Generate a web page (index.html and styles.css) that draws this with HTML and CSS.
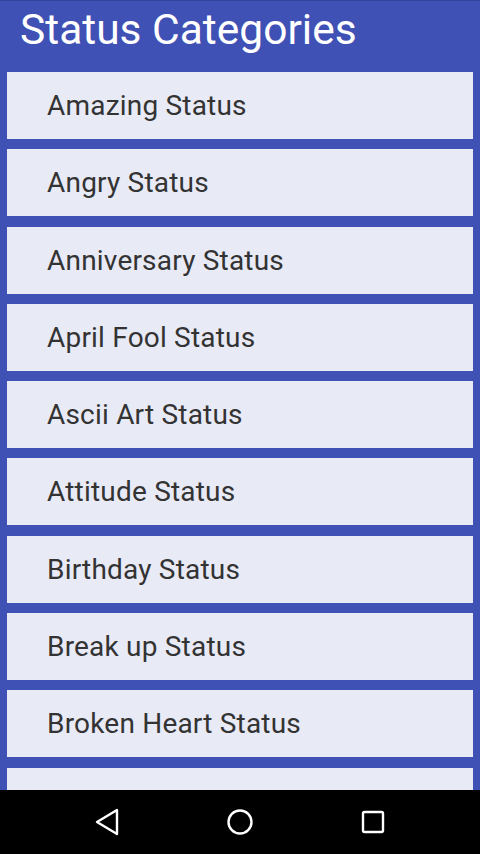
FILE: index.html
```html
<!DOCTYPE html>
<html lang="en">
<head>
  <meta charset="UTF-8">
  <meta name="viewport" content="width=device-width, initial-scale=1.0">
  <title>Status Categories</title>
  <link rel="stylesheet" href="styles.css">
</head>
<body>
  <div class="tela">
    <header class="topo">
      <h1>Status Categories</h1>
    </header>
    <div class="lista">
      <div class="item">Amazing Status</div>
      <div class="item">Angry Status</div>
      <div class="item">Anniversary Status</div>
      <div class="item">April Fool Status</div>
      <div class="item">Ascii Art Status</div>
      <div class="item">Attitude Status</div>
      <div class="item">Birthday Status</div>
      <div class="item">Break up Status</div>
      <div class="item">Broken Heart Status</div>
      <!-- proximo item fica escondido atras da barra -->
      <div class="item"></div>
    </div>
    <nav class="navegacao">
      <!-- voltar -->
      <svg width="26" height="30" viewBox="0 0 26 30">
        <polygon points="3,15 23,3 23,27" fill="none" stroke="#fff" stroke-width="2.4" stroke-linejoin="round"/>
      </svg>
      <!-- inicio -->
      <svg width="30" height="30" viewBox="0 0 30 30">
        <circle cx="15" cy="15" r="11.5" fill="none" stroke="#fff" stroke-width="2.4"/>
      </svg>
      <!-- recentes -->
      <svg width="26" height="26" viewBox="0 0 26 26">
        <rect x="3" y="3" width="20" height="20" rx="1.5" fill="none" stroke="#fff" stroke-width="2.4"/>
      </svg>
    </nav>
  </div>
</body>
</html>
```

FILE: styles.css
```css
:root {
  --primary-color: #3f51b5;
  --primary-dark: #34449c;
  --card-color: #e8eaf6;
  --text-color: #333;
  --nav-color: #000;
}

* {
  box-sizing: border-box;
  margin: 0;
  padding: 0;
}

body {
  font-family: Roboto, 'Noto Sans', sans-serif;
  background-color: var(--nav-color);
}

.tela {
  display: flex;
  flex-direction: column;
  width: 480px;
  height: 854px;
  overflow: hidden;
}

.topo {
  background-color: var(--primary-color);
  border-top: 1px solid var(--primary-dark);
  height: 62px;
  padding: 4px 0 0 20px;

  h1 {
    color: #fff;
    font-size: 42.5px;
    font-weight: 400;
    line-height: 50px;
  }
}

.lista {
  flex: 1;
  overflow: hidden;
  display: flex;
  flex-direction: column;
  gap: 10.3px;
  padding: 10px 7px 0;
  background-color: var(--primary-color);

  .item {
    flex-shrink: 0;
    display: flex;
    align-items: center;
    height: 67px;
    padding-left: 40px;
    background-color: var(--card-color);
    color: var(--text-color);
    font-size: 28px;
    letter-spacing: 0.2px;
  }
}

.navegacao {
  height: 64px;
  flex-shrink: 0;
  display: flex;
  align-items: center;
  justify-content: space-between;
  padding: 0 94px 0 94px;
  background-color: var(--nav-color);
}
```
